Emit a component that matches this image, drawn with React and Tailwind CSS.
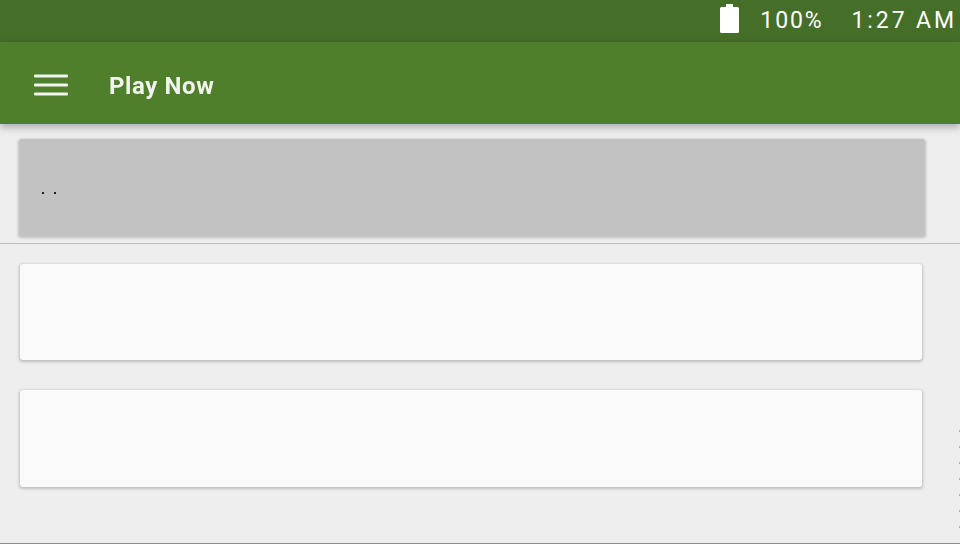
const cardShadow = "shadow-[0_1px_3px_1px_rgba(0,0,0,0.2)]";
const ticks = [0, 1, 2, 3, 4, 5, 6];

function MenuIcon() {
  return (
    <svg width="34" height="22" viewBox="0 0 34 22" className="ml-[34px] mt-[4px] shrink-0 blur-[0.4px]">
      <rect x="0" y="0.5" width="34" height="3" rx="1" fill="#f1f4ee" />
      <rect x="0" y="9.5" width="34" height="3" rx="1" fill="#f1f4ee" />
      <rect x="0" y="18.5" width="34" height="3" rx="1" fill="#f1f4ee" />
    </svg>
  );
}

function BatteryIcon() {
  return (
    <svg width="19" height="29" viewBox="0 0 19 29" className="mb-[6px] shrink-0 blur-[0.4px]">
      <path d="M6 0h7v3h4.500a1.500 1.500 0 0 1 1.500 1.500V27.500a1.500 1.500 0 0 1-1.500 1.500H1.500A1.500 1.500 0 0 1 0 27.500V4.500A1.500 1.500 0 0 1 1.500 3H6z" fill="#ffffff" />
    </svg>
  );
}

export default function App() {
  return (
    <div className="relative flex h-[544px] w-[960px] flex-col overflow-hidden bg-[#eeeeee] font-['Roboto',sans-serif]">
      <div className="flex h-[42px] shrink-0 items-center justify-end bg-[#456e28] text-white">
        <BatteryIcon />
        <span className="ml-[21px] text-[23px] tracking-[1.9px]">100%</span>
        <span className="ml-[28px] mr-[3px] text-[23px] tracking-[2.9px]">1:27 AM</span>
      </div>

      <div className="relative z-10 flex h-[82px] shrink-0 items-center bg-[#4f7f2b] shadow-[0_3px_8px_rgba(0,0,0,0.3)]">
        <MenuIcon />
        <span className="ml-[41px] mt-[6px] text-[24px] font-bold tracking-[0.6px] text-[#f1f4ee] blur-[0.5px]">Play Now</span>
      </div>

      <div className="flex grow flex-col">
        <div className="border-b border-[#bdbdbd] pb-[7px] pl-[19px] pr-[35px] pt-[15px]">
          <div className={`flex h-[97px] items-center rounded-[3px] bg-[#c2c2c2] pl-[23px] pt-[10px] ${cardShadow}`}>
            <span className="h-[2px] w-[2px] bg-[#222222]" />
            <span className="ml-[10px] h-[2px] w-[2px] bg-[#222222]" />
          </div>
        </div>

        <div className="flex grow flex-col gap-[30px] border-b border-[#8f8f8f] pl-[20px] pr-[38px] pt-[20px]">
          <div className={`h-[96px] rounded-[3px] bg-[#fafafa] ${cardShadow}`} />
          <div className={`h-[97px] rounded-[3px] bg-[#fafafa] ${cardShadow}`} />
        </div>
      </div>

      <div className="absolute right-0 top-[430px] flex flex-col gap-[14px]">
        {ticks.map((t) => (
          <span key={t} className="h-[2px] w-[1px] bg-[#b0b0b0]" />
        ))}
      </div>
    </div>
  );
}
